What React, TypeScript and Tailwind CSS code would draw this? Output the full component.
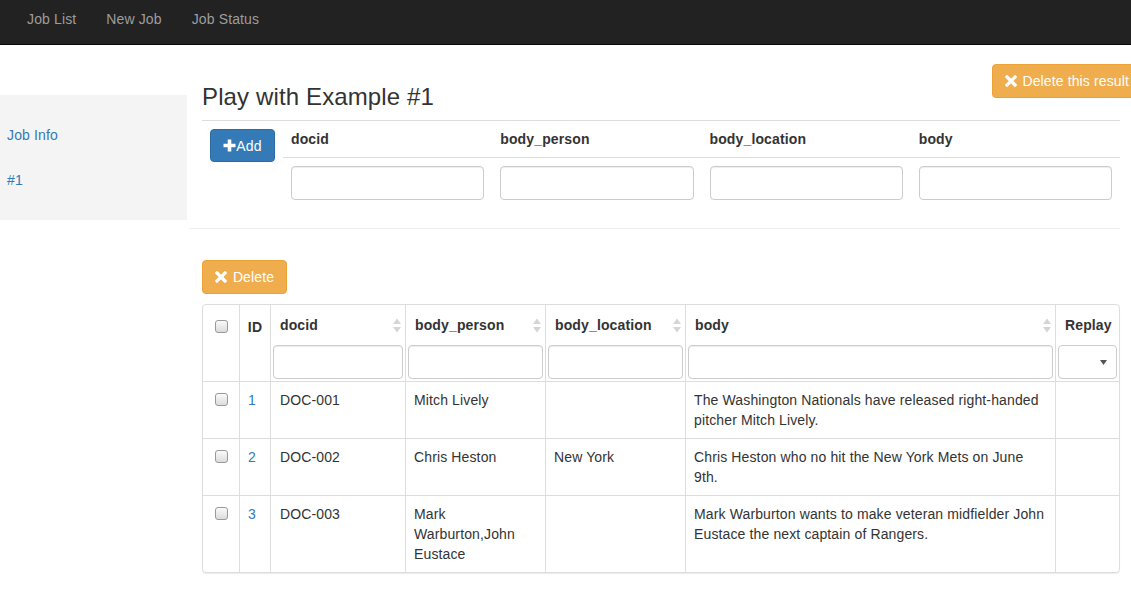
import React from 'react';

const FONT = "font-['Liberation_Sans',Arial,sans-serif]";

function RemoveIcon() {
  return (
    <svg width="12" height="12" viewBox="0 0 12 12" className="shrink-0">
      <path d="M2 2 L10 10 M10 2 L2 10" stroke="white" strokeWidth="3.2" strokeLinecap="square" />
    </svg>
  );
}

function PlusIcon() {
  return (
    <svg width="13" height="13" viewBox="0 0 13 13" className="shrink-0">
      <path d="M6.5 0.5 V12.5 M0.5 6.5 H12.5" stroke="white" strokeWidth="3.6" />
    </svg>
  );
}

function SortIcon() {
  return (
    <svg width="8" height="15" viewBox="0 0 8 15" className="shrink-0">
      <path d="M0 6 L4 0.5 L8 6 Z" fill="#d5d5d5" />
      <path d="M0 9 L4 14.5 L8 9 Z" fill="#d5d5d5" />
    </svg>
  );
}

function Checkbox() {
  return (
    <div className="w-[13px] h-[13px] rounded-[3px] border border-[#9a9a9a] bg-gradient-to-b from-[#fafafa] to-[#dcdcdc]" />
  );
}

function TextInput() {
  return (
    <div className="h-[34px] w-full rounded-[4px] border border-[#ccc] bg-white shadow-[inset_0_1px_1px_rgba(0,0,0,0.075)]" />
  );
}

const rows = [
  { id: 1, docid: 'DOC-001', person: 'Mitch Lively', location: '', body: 'The Washington Nationals have released right-handed pitcher Mitch Lively.' },
  { id: 2, docid: 'DOC-002', person: 'Chris Heston', location: 'New York', body: 'Chris Heston who no hit the New York Mets on June 9th.' },
  { id: 3, docid: 'DOC-003', person: 'Mark Warburton,John Eustace', location: '', body: 'Mark Warburton wants to make veteran midfielder John Eustace the next captain of Rangers.' },
];

const GRID = 'grid grid-cols-[36px_31px_135px_140px_140px_370px_1fr]';

export default function App() {
  return (
    <div className={`${FONT} text-[14px] leading-[20px] tracking-[0.13px] text-[#333] bg-white min-h-[589px] overflow-hidden`}>
      <nav className="h-[45px] bg-[#222] border-b border-[#080808] flex pl-[12px]">
        {['Job List', 'New Job', 'Job Status'].map((l) => (
          <a key={l} className="px-[15px] pt-[9px] text-[#9d9d9d]">{l}</a>
        ))}
      </nav>

      <div className="flex">
        <aside className="w-[187px] shrink-0 mt-[50px] h-[125px] bg-[#f4f4f4] pt-[30px] pl-[7px] flex flex-col gap-[25px]">
          <a className="text-[#337ab7]">Job Info</a>
          <a className="text-[#337ab7]">#1</a>
        </aside>

        <main className="w-[918px] ml-[15px] shrink-0">
          <div className="flex justify-between items-start pt-[19px]">
            <h3 className="pt-[20px] text-[24px] leading-[26px] font-normal">Play with Example #1</h3>
            <button className="h-[34px] px-[12px] mr-[-22px] rounded-[4px] bg-[#f0ad4e] border border-[#eea236] text-white flex items-center gap-[5px]">
              <RemoveIcon />
              <span>Delete this result</span>
            </button>
          </div>

          <div className="mt-[10px] border-t border-[#ddd] flex">
            <div className="w-[81px] shrink-0 p-[8px]">
              <button className="h-[33px] w-[65px] rounded-[4px] bg-[#337ab7] border border-[#2e6da4] text-white flex items-center justify-center">
                <PlusIcon />
                <span>Add</span>
              </button>
            </div>
            <div className="flex-1 grid grid-cols-4">
              {['docid', 'body_person', 'body_location', 'body'].map((h) => (
                <div key={h} className="p-[8px] font-bold border-b border-[#ddd]">{h}</div>
              ))}
              {[0, 1, 2, 3].map((i) => (
                <div key={i} className="p-[8px]">
                  <TextInput />
                </div>
              ))}
            </div>
          </div>

          <div className="mt-[20px] ml-[-13px] border-t border-[#eee]" />

          <button className="mt-[31px] h-[34px] w-[85px] rounded-[4px] bg-[#f0ad4e] border border-[#eea236] text-white flex items-center justify-center gap-[6px]">
            <RemoveIcon />
            <span>Delete</span>
          </button>

          <div className="mt-[10px] border border-[#ddd] rounded-[4px] shadow-[0_1px_1px_rgba(0,0,0,0.08)]">
            <div className={GRID}>
              <div className="flex justify-center pt-[15px]">
                <Checkbox />
              </div>
              <div className="border-l border-[#ddd] font-bold pt-[12px] text-center">ID</div>
              {['docid', 'body_person', 'body_location', 'body'].map((h) => (
                <div key={h} className="border-l border-[#ddd] pt-[10px] pb-[2px] px-[2px]">
                  <div className="flex items-center justify-between pl-[7px] pr-[2px] font-bold">
                    <span>{h}</span>
                    <SortIcon />
                  </div>
                  <div className="mt-[10px]">
                    <TextInput />
                  </div>
                </div>
              ))}
              <div className="border-l border-[#ddd] pt-[10px] pb-[2px] px-[2px]">
                <div className="pl-[7px] font-bold">Replay</div>
                <div className="mt-[10px] h-[34px] rounded-[4px] border border-[#ccc] bg-white flex items-center justify-end pr-[9px]">
                  <svg width="7" height="5" viewBox="0 0 7 5">
                    <path d="M0 0 H7 L3.5 5 Z" fill="#555" />
                  </svg>
                </div>
              </div>
            </div>

            {rows.map((r) => (
              <div key={r.id} className={`${GRID} border-t border-[#ddd]`}>
                <div className="flex justify-center pt-[11px]">
                  <Checkbox />
                </div>
                <div className="border-l border-[#ddd] p-[8px] text-[#337ab7]">{r.id}</div>
                <div className="border-l border-[#ddd] p-[8px] pl-[9px]">{r.docid}</div>
                <div className="border-l border-[#ddd] p-[8px]">{r.person}</div>
                <div className="border-l border-[#ddd] p-[8px]">{r.location}</div>
                <div className="border-l border-[#ddd] p-[8px]">{r.body}</div>
                <div className="border-l border-[#ddd] p-[8px]" />
              </div>
            ))}
          </div>
        </main>
      </div>
    </div>
  );
}
